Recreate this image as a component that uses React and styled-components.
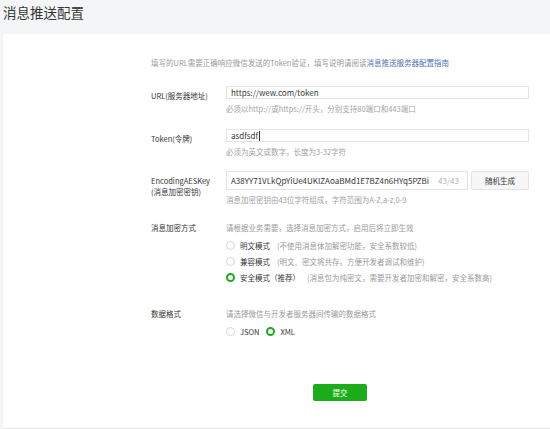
import React from 'react';
import styled, { createGlobalStyle } from 'styled-components';

const GlobalStyle = createGlobalStyle`
  body {
    margin: 0;
    background: #f4f5f6;
    font-family: "Noto Sans CJK SC", "Noto Sans", sans-serif;
    overflow: hidden;
  }
`;

const Page = styled.div`
  width: 550px;
  height: 429px;
`;

const Title = styled.h2`
  margin: 0;
  padding: 1px 0 0 3px;
  height: 34px;
  box-sizing: border-box;
  font-size: 13.5px;
  line-height: 22px;
  font-weight: 400;
  color: #353535;
`;

const Card = styled.div`
  /* white panel running off the right edge */
  margin-left: 3px;
  width: 560px;
  height: 395px;
  box-sizing: border-box;
  background: #fff;
  border-bottom: 1px solid #e7e7eb;
  padding: 23px 0 0 148px;
`;

const Form = styled.div`
  width: 378px;
`;

const Intro = styled.div`
  font-size: 7.5px;
  line-height: 12px;
  color: #9a9a9a;
  margin-bottom: 17px;
  white-space: nowrap;
`;

const Link = styled.a`
  color: #4f6fb5;
  text-decoration: none;
`;

const Row = styled.div`
  display: grid;
  grid-template-columns: 75px 1fr;
  margin-bottom: ${p => p.$gap}px;
`;

const Label = styled.div`
  font-size: 7.5px;
  line-height: ${p => (p.$plain ? 12 : 11)}px;
  padding-top: ${p => (p.$plain ? 0 : 4)}px;
  color: #353535;
  white-space: nowrap;
`;

const Control = styled.div`
  display: flex;
  flex-direction: column;
`;

const InputLine = styled.div`
  display: flex;
  gap: 3px;
`;

const Field = styled.div`
  flex: 1;
  height: 19px;
  box-sizing: border-box;
  border: 1px solid #e4e4e4;
  padding: 0 8px 0 4px;
  display: flex;
  align-items: center;
  font-size: 8px;
  color: #353535;
  white-space: nowrap;
  overflow: hidden;
`;

const Caret = styled.span`
  display: inline-block;
  width: 1px;
  height: 10px;
  margin-left: 0.5px;
  background: #353535;
`;

const Count = styled.span`
  margin-left: auto;
  color: #b2b2b2;
`;

const GhostButton = styled.button`
  width: 58px;
  height: 19px;
  box-sizing: border-box;
  border: 1px solid #e4e4e4;
  border-radius: 2px;
  background: #f7f7f7;
  font-family: inherit;
  font-size: 7.5px;
  color: #353535;
  padding: 0;
`;

const Hint = styled.div`
  margin-top: 4px;
  font-size: 7.5px;
  line-height: 12px;
  color: #a3a3a3;
  white-space: nowrap;
`;

const Desc = styled.div`
  font-size: 7.5px;
  line-height: 12px;
  color: #9a9a9a;
  white-space: nowrap;
`;

const RadioList = styled.div`
  margin-top: 3px;
  display: flex;
  flex-direction: ${p => (p.$inline ? 'row' : 'column')};
  gap: ${p => (p.$inline ? 7 : 0)}px;
`;

const RadioItem = styled.label`
  height: 16px;
  display: flex;
  align-items: center;
  font-size: 7.5px;
  color: #353535;
  white-space: nowrap;
`;

const RadioCircle = styled.span`
  width: 9px;
  height: 9px;
  box-sizing: border-box;
  border-radius: 50%;
  border: ${p => (p.$checked ? '2.5px solid #1aad19' : '1px solid #d6d6d6')};
  background: #fff;
  margin-right: 5px;
  flex-shrink: 0;
`;

const Note = styled.span`
  margin-left: 7px;
  color: #9a9a9a;
`;

const Submit = styled.button`
  display: block;
  margin: 45px auto 0;
  width: 54px;
  height: 17px;
  border: none;
  border-radius: 2px;
  background: #1aad19;
  color: #fff;
  font-family: inherit;
  font-size: 7.5px;
  padding: 0;
`;

const modes = [
  { name: '明文模式', note: '(不使用消息体加解密功能，安全系数较低)' },
  { name: '兼容模式', note: '(明文、密文将共存，方便开发者调试和维护)' },
  { name: '安全模式（推荐）', note: '(消息包为纯密文，需要开发者加密和解密，安全系数高)', checked: true },
];

const Radio = ({ checked, children }) => (
  <RadioItem>
    <RadioCircle $checked={checked} />
    {children}
  </RadioItem>
);

const App = () => (
  <Page>
    <GlobalStyle />
    <Title>消息推送配置</Title>
    <Card>
      <Form>
        <Intro>
          填写的URL需要正确响应微信发送的Token验证，填写说明请阅读<Link href="#">消息推送服务器配置指南</Link>
        </Intro>

        <Row $gap={14}>
          <Label>URL(服务器地址)</Label>
          <Control>
            <Field>https://wew.com/token</Field>
            <Hint>必须以http://或https://开头，分别支持80端口和443端口</Hint>
          </Control>
        </Row>

        <Row $gap={13}>
          <Label>Token(令牌)</Label>
          <Control>
            <Field>asdfsdf<Caret /></Field>
            <Hint>必须为英文或数字，长度为3-32字符</Hint>
          </Control>
        </Row>

        <Row $gap={16}>
          <Label>EncodingAESKey<br />(消息加密密钥)</Label>
          <Control>
            <InputLine>
              <Field>
                A38YY71VLkQpYiUe4UKIZAoaBMd1E7BZ4n6HYq5PZBi
                <Count>43/43</Count>
              </Field>
              <GhostButton>随机生成</GhostButton>
            </InputLine>
            <Hint>消息加密密钥由43位字符组成，字符范围为A-Z,a-z,0-9</Hint>
          </Control>
        </Row>

        <Row $gap={23}>
          <Label $plain>消息加密方式</Label>
          <Control>
            <Desc>请根据业务需要，选择消息加密方式，启用后将立即生效</Desc>
            <RadioList>
              {modes.map(m => (
                <Radio key={m.name} checked={m.checked}>
                  {m.name}
                  <Note>{m.note}</Note>
                </Radio>
              ))}
            </RadioList>
          </Control>
        </Row>

        <Row $gap={0}>
          <Label $plain>数据格式</Label>
          <Control>
            <Desc>请选择微信与开发者服务器间传输的数据格式</Desc>
            <RadioList $inline>
              <Radio>JSON</Radio>
              <Radio checked>XML</Radio>
            </RadioList>
          </Control>
        </Row>

        <Submit>提交</Submit>
      </Form>
    </Card>
  </Page>
);

export default App;
